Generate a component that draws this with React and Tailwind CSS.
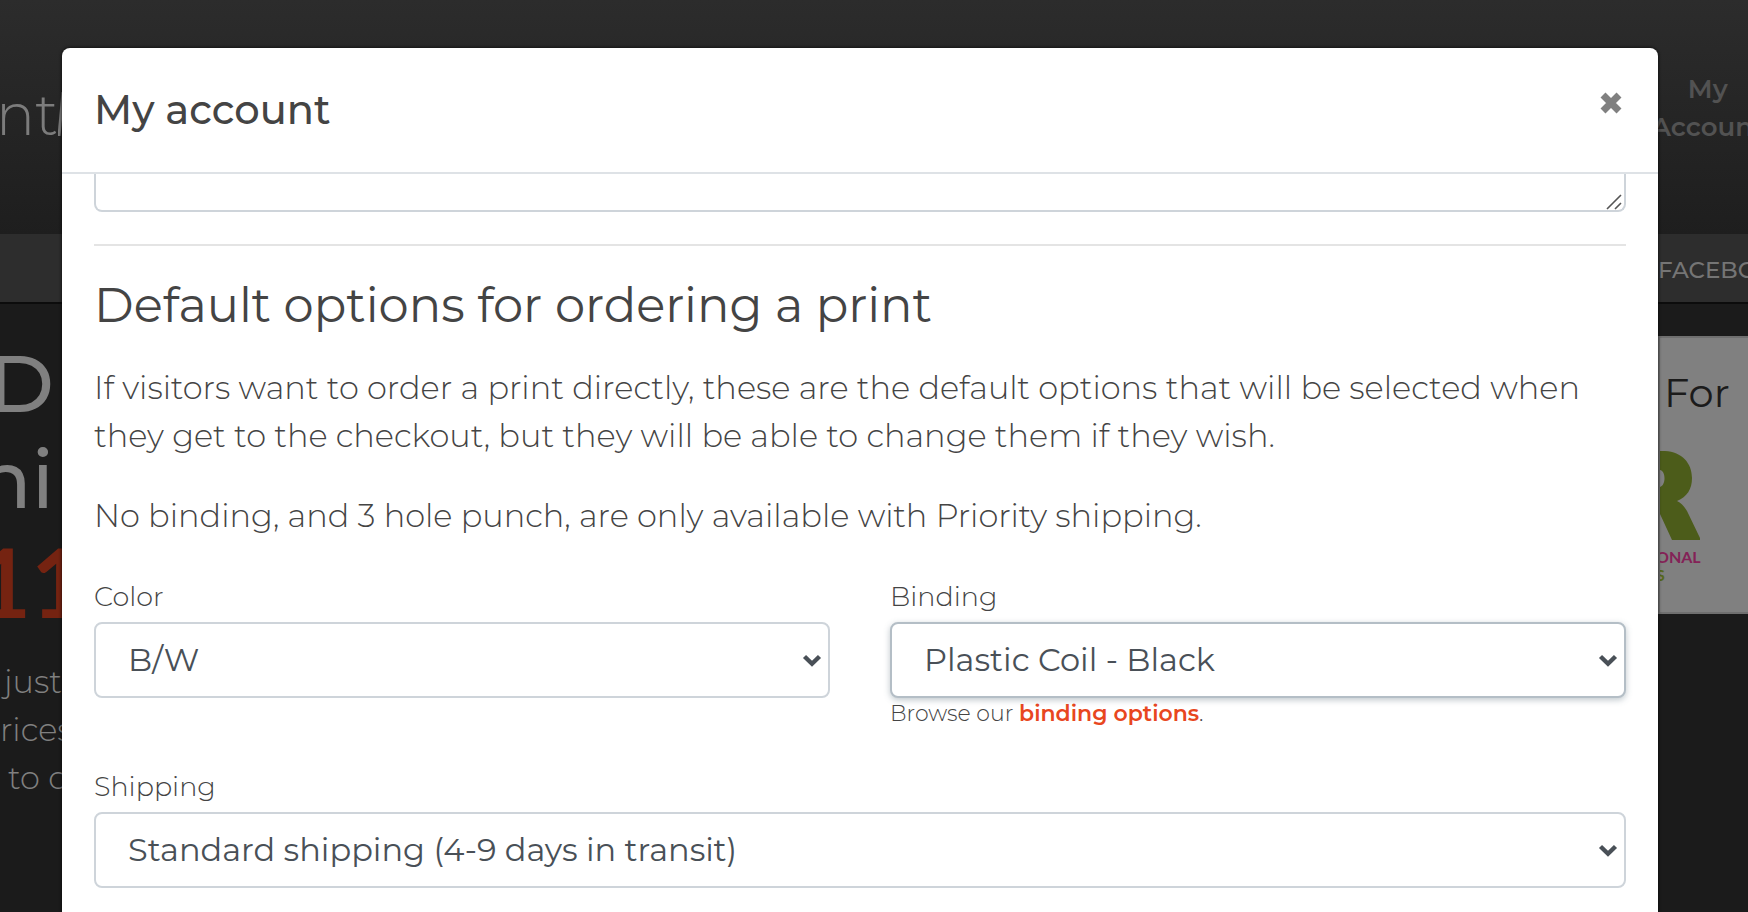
import { useState } from "react";

function Chevron() {
  return (
    <svg
      className="pointer-events-none absolute right-2 top-8 h-4 w-5"
      viewBox="0 0 20 16"
      fill="none"
      stroke="#495057"
      strokeWidth="4.4"
      aria-hidden="true"
    >
      <path d="M2.5 2.5 10 9.8 17.5 2.5" />
    </svg>
  );
}

function SelectField({ id, label, options, active, children }) {
  const [value, setValue] = useState(options[0]);

  return (
    <div className="mb-8 flex-1">
      <label htmlFor={id} className="block text-[27px] leading-[50px] font-light">
        {label}
      </label>
      <div className="relative">
        <select
          id={id}
          value={value}
          onChange={(e) => setValue(e.target.value)}
          className={
            active
              ? "block h-[76px] w-full appearance-none rounded-lg border-2 border-[#b4bec6] bg-white px-8 text-[32px] text-[#495057] shadow-[0_2px_6px_rgba(73,95,110,0.35)] outline-none"
              : "block h-[76px] w-full appearance-none rounded-lg border-2 border-[#ced4da] bg-white px-8 text-[32px] text-[#495057] outline-none"
          }
        >
          {options.map((o) => (
            <option key={o}>{o}</option>
          ))}
        </select>
        <Chevron />
      </div>
      {children}
    </div>
  );
}

// Site behind the modal, already dimmed
function SitePage() {
  return (
    <div className="flex h-full flex-col bg-[#1b1b1b]">
      <header className="flex h-[234px] shrink-0 justify-between bg-linear-to-b from-[#2c2c2c] to-[#1e1e1e]">
        <div className="-ml-1 flex items-start pt-20 text-[#7c7c7c]">
          <span className="text-[58px] leading-[70px] font-light">nt</span>
          <svg className="mt-3 h-[44px] w-3" viewBox="0 0 12 44" fill="none" stroke="currentColor" strokeWidth="3" aria-hidden="true">
            <path d="M1 44 5 0" />
          </svg>
        </div>
        <a href="#account" className="-mr-4 pt-[70px] text-center text-[26px] leading-[38px] font-semibold text-[#525252]">
          My
          <br />
          Account
        </a>
      </header>

      <nav className="flex h-[70px] shrink-0 items-center justify-end border-b-2 border-[#0c0c0c] bg-[#2d2d2d] pt-1">
        <a href="#facebook" className="w-[90px] text-[23px] font-medium whitespace-nowrap text-[#757575]">
          FACEBOOK
        </a>
      </nav>

      <main className="flex justify-between pt-8">
        <div className="w-[62px] overflow-hidden text-[#808080]">
          <div className="flex flex-col items-end pr-2 text-[80px] leading-[96px] font-medium">
            <span>D</span>
            <span>ni</span>
          </div>
          <div className="flex justify-center font-[Lato] text-[95px] leading-[106px] font-bold text-[#752311]">
            11
          </div>
          <p className="mt-6 flex flex-col text-[32px] leading-[48px] font-light whitespace-nowrap">
            <span className="pl-1">just</span>
            <span>rices</span>
            <span className="pl-2">to c</span>
          </p>
        </div>

        <aside className="h-[278px] w-[90px] overflow-hidden border-2 border-r-0 border-[#6f6f6f] bg-[#808080]">
          <h3 className="mt-[30px] ml-1 text-[40px] leading-[50px] text-[#1b1b1b]">For</h3>
          <svg className="mt-[33px] h-[89px] w-[40px]" viewBox="0 0 40 89" aria-hidden="true">
            <path
              fill="#4c5c1a"
              fillRule="evenodd"
              d="M0 0H5C22 1 32 12 32 27C32 38 27 46 17 50C21 52 24 55 27 60L41 89H12L0 63V36C6 34 6 20 0 19Z"
            />
          </svg>
          <div className="-ml-1 flex flex-col pt-2 font-[Lato] text-[16px] leading-[18px] font-bold">
            <span className="text-[#842257]">ONAL</span>
            <span className="text-[#56681d]">S</span>
          </div>
        </aside>
      </main>
    </div>
  );
}

function AccountModal() {
  const [notes, setNotes] = useState("");

  return (
    <div
      role="dialog"
      aria-labelledby="modal-title"
      className="absolute inset-x-0 top-12 bottom-0 mr-[90px] ml-[62px] flex flex-col overflow-hidden rounded-t-lg bg-white text-[#444] shadow-[0_0_3px_1px_rgba(0,0,0,0.5)]"
    >
      <div className="flex h-[126px] shrink-0 items-start justify-between border-b-2 border-[#dee2e6] px-8 pt-8">
        <h2 id="modal-title" className="text-[40px] leading-[60px] font-medium">
          My account
        </h2>
        <button type="button" aria-label="Close" className="mt-3 mr-1">
          <svg className="h-[22px] w-[22px]" viewBox="0 0 22 22" fill="none" stroke="#808080" strokeWidth="7" aria-hidden="true">
            <path d="M3 3 19 19M19 3 3 19" />
          </svg>
        </button>
      </div>

      <div className="px-8">
        <div className="relative">
          <textarea
            aria-label="Notes"
            value={notes}
            onChange={(e) => setNotes(e.target.value)}
            className="block h-[38px] w-full resize-none rounded-b-lg border-2 border-t-0 border-[#ced4da] outline-none"
          />
          <svg className="pointer-events-none absolute right-1 bottom-0.5 h-4 w-4" viewBox="0 0 16 16" fill="none" stroke="#555" strokeWidth="1.6" aria-hidden="true">
            <path d="M1 15 15 1M9 15 15 9" />
          </svg>
        </div>

        <hr className="my-8 border-t-2 border-[#e4e4e4]" />

        <h3 className="mb-8 text-[48px] leading-[54px]">Default options for ordering a print</h3>
        <p className="mb-8 text-[32px] leading-[48px] font-light">
          If visitors want to order a print directly, these are the default options that will be selected when
          they get to the checkout, but they will be able to change them if they wish.
        </p>
        <p className="mb-8 text-[32px] leading-[48px] font-light">
          No binding, and 3 hole punch, are only available with Priority shipping.
        </p>

        <form>
          <div className="flex gap-[60px]">
            <SelectField id="color" label="Color" options={["B/W", "Color"]} />
            <SelectField id="binding" label="Binding" active options={["Plastic Coil - Black", "No binding", "3 hole punch"]}>
              <p className="text-[22px] leading-8 font-light">
                Browse our{" "}
                <a href="#binding-options" className="font-semibold text-[#e84620]">
                  binding options
                </a>
                .
              </p>
            </SelectField>
          </div>
          <SelectField
            id="shipping"
            label="Shipping"
            options={["Standard shipping (4-9 days in transit)", "Priority shipping"]}
          />
        </form>
      </div>
    </div>
  );
}

function App() {
  return (
    <div className="relative h-screen overflow-hidden font-[Montserrat,Inter,sans-serif]">
      <SitePage />
      <AccountModal />
    </div>
  );
}

export default App;
